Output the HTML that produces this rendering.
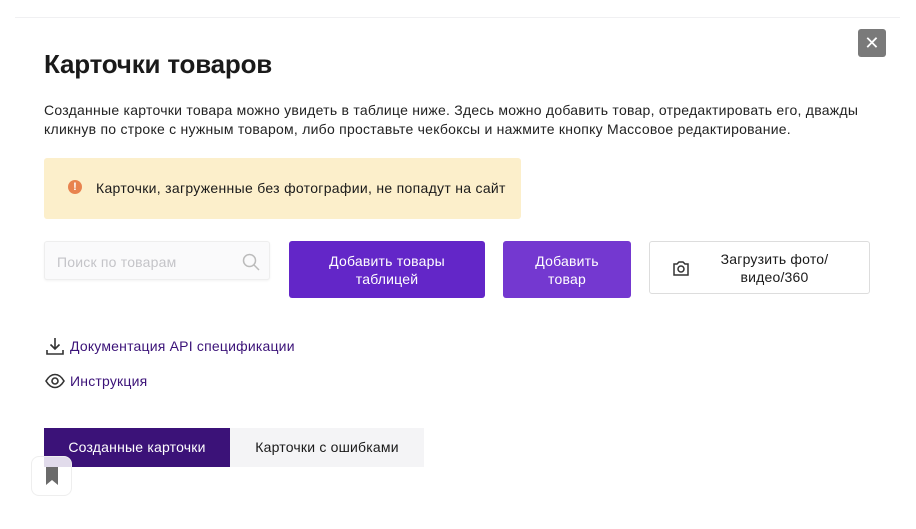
<!DOCTYPE html>
<html><head><meta charset="utf-8"><style>
*{margin:0;padding:0;box-sizing:border-box}
body{width:916px;height:529px;background:#fff;font-family:"Liberation Sans",sans-serif;color:#1a1a1a;position:relative;overflow:hidden;letter-spacing:0.2px}
.a{position:absolute}
.topline{left:15px;top:17px;width:885px;height:1px;background:#f0f0f2}
.close{left:858px;top:29px;width:28px;height:28px;background:#7a7a7a;border-radius:3px;color:#fff;font-size:18px;text-align:center;line-height:28px}
h1{position:absolute;left:44px;top:49px;font-size:26px;font-weight:bold;letter-spacing:-0.2px}
.p{left:44px;top:101px;font-size:14px;line-height:19px;width:850px;color:#222;letter-spacing:0.25px}
.alert{left:44px;top:158px;width:477px;height:61px;background:#fcefcb;border-radius:3px}
.dot{left:68px;top:180px;width:14px;height:14px;border-radius:50%;background:#e8834f;color:#fff;font-size:11px;font-weight:bold;text-align:center;line-height:14px}
.at{left:96px;top:180px;font-size:14px;letter-spacing:0.3px}
.search{left:44px;top:241px;width:226px;height:39px;border:1px solid #eee;border-radius:3px;background:#fafafb;box-shadow:0 1px 2px rgba(0,0,0,.05)}
.search span{position:absolute;left:12px;top:12px;font-size:14px;color:#c4c4c8}
.btn{color:#fff;font-size:14px;text-align:center;border-radius:3px;display:flex;align-items:center;justify-content:center;line-height:18px}
.b1{left:289px;top:241px;width:196px;height:57px;background:#6326c8}
.b2{left:503px;top:241px;width:128px;height:57px;background:#7438d0}
.b3{left:649px;top:241px;width:221px;height:53px;border:1px solid #ddd;border-radius:3px;color:#1a1a1a;background:#fff}
.link{left:70px;font-size:14px;color:#3b1278}
.tab1{left:44px;top:428px;width:186px;height:39px;background:#3b1278;color:#fff;font-size:14px;line-height:39px;text-align:center}
.tab2{left:230px;top:428px;width:194px;height:39px;background:#f4f4f6;font-size:14px;line-height:39px;text-align:center}
.bm{left:31px;top:456px;width:41px;height:40px;border:1px solid #eee;border-radius:8px;background:rgba(255,255,255,.85)}
</style></head><body>
<div class="a topline"></div>
<div class="a close">✕</div>
<h1>Карточки товаров</h1>
<div class="a p">Созданные карточки товара можно увидеть в таблице ниже. Здесь можно добавить товар, отредактировать его, дважды кликнув по строке с нужным товаром, либо проставьте чекбоксы и нажмите кнопку Массовое редактирование.</div>
<div class="a alert"></div>
<div class="a dot">!</div>
<div class="a at">Карточки, загруженные без фотографии, не попадут на сайт</div>
<div class="a search"><span>Поиск по товарам</span>
<svg style="position:absolute;left:196px;top:10px" width="20" height="20" viewBox="0 0 20 20" fill="none" stroke="#bbb" stroke-width="1.5"><circle cx="8.5" cy="8.5" r="6"/><path d="M13 13l5 5"/></svg></div>
<div class="a btn b1">Добавить товары<br>таблицей</div>
<div class="a btn b2">Добавить<br>товар</div>
<div class="a btn b3"><svg style="position:absolute;left:22px;top:18px" width="18" height="17" viewBox="0 0 18 17" fill="none" stroke="#333" stroke-width="1.5"><path d="M2 4h3l2-2h4l2 2h3v11H2z"/><circle cx="9" cy="9" r="3"/></svg><span style="margin-left:30px">Загрузить фото/<br>видео/360</span></div>
<svg class="a" style="left:45px;top:336px" width="20" height="20" viewBox="0 0 20 20" fill="none" stroke="#333" stroke-width="1.6"><path d="M10 2v11M5.5 8.5L10 13l4.5-4.5M2 14v4h16v-4"/></svg>
<div class="a link" style="top:338px">Документация API спецификации</div>
<svg class="a" style="left:45px;top:373px" width="20" height="16" viewBox="0 0 20 16" fill="none" stroke="#333" stroke-width="1.6"><path d="M1 8C4 3 7 1.5 10 1.5S16 3 19 8C16 13 13 14.5 10 14.5S4 13 1 8z"/><circle cx="10" cy="8" r="3"/></svg>
<div class="a link" style="top:373px">Инструкция</div>
<div class="a tab1">Созданные карточки</div>
<div class="a tab2">Карточки с ошибками</div>
<div class="a bm"><svg style="position:absolute;left:13px;top:10px" width="14" height="18" viewBox="0 0 14 18"><path d="M1 0h12v18l-6-5-6 5z" fill="#6b6b6b"/></svg></div>
</body></html>
